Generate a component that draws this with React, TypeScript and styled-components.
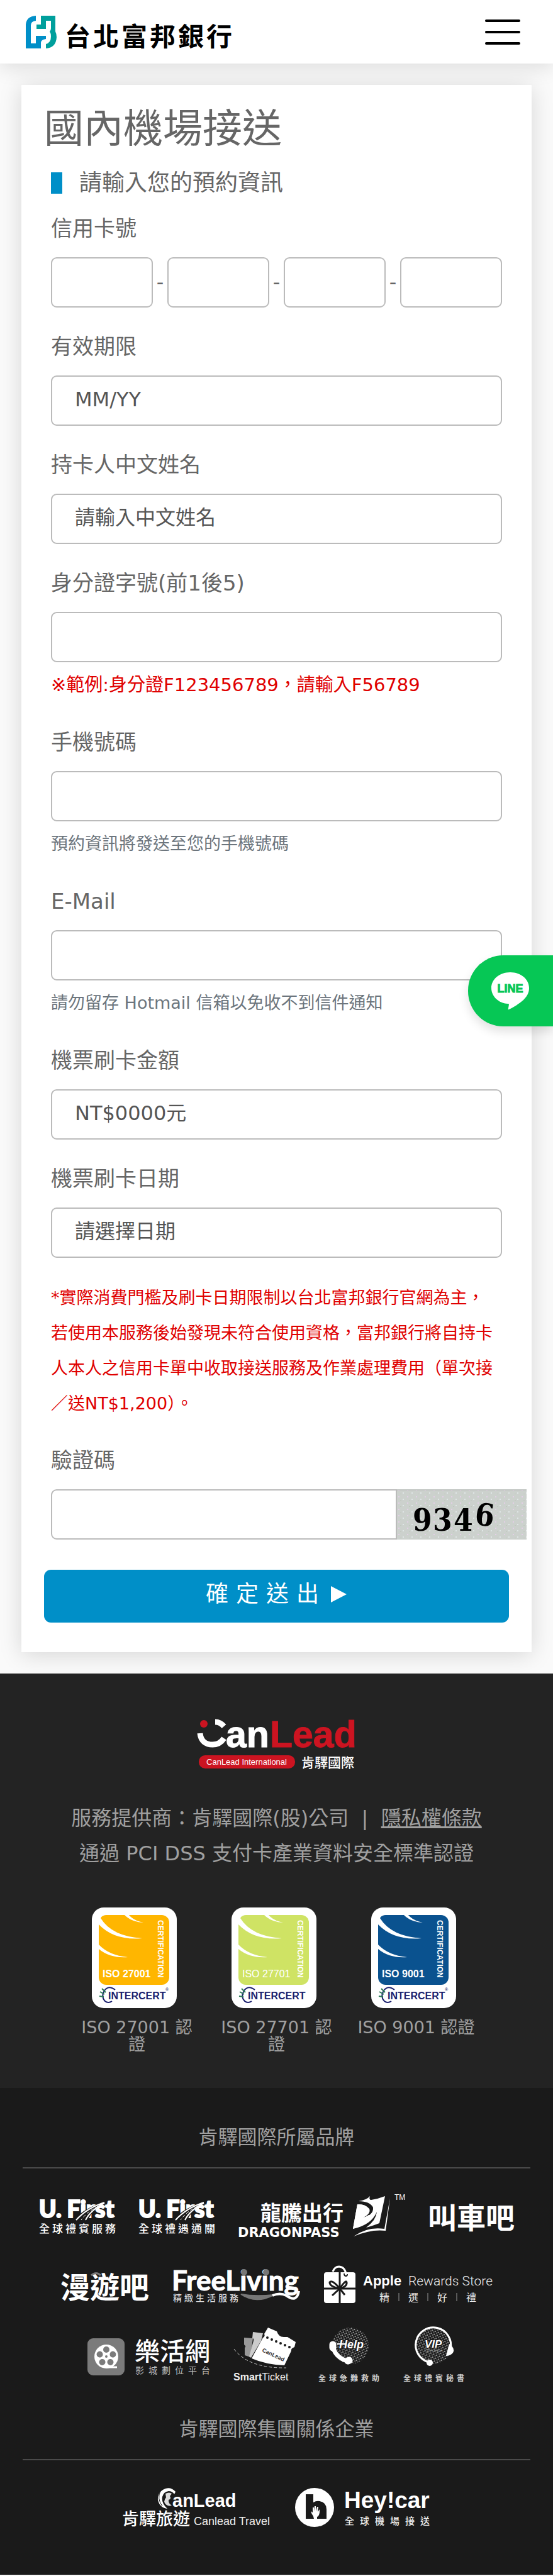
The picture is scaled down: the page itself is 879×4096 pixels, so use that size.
import React from 'react';
import styled, { createGlobalStyle } from 'styled-components';

const textFont = `'DejaVu Sans', 'Noto Sans CJK TC', sans-serif`;
const logoFont = `'Liberation Sans', 'Noto Sans CJK TC', sans-serif`;
const cjkFont = `'Noto Sans CJK TC', sans-serif`;

const GlobalStyle = createGlobalStyle`
  *, *::before, *::after { box-sizing: border-box; }
  body {
    margin: 0;
    background: #fafafa;
    color: #666;
    font-family: ${textFont};
  }
  svg { overflow: visible; }
`;

const Page = styled.div`
  position: relative;
  overflow-x: hidden;
`;

/* ---------- header ---------- */

const Header = styled.header`
  display: flex;
  align-items: center;
  justify-content: space-between;
  height: 101px;
  padding: 0 52px 0 41px;
  background: #fff;
  box-shadow: 0 6px 30px rgba(0, 0, 0, 0.12);
`;

const BankLink = styled.a`
  display: flex;
  align-items: center;
  gap: 12px;
  color: #000;
  text-decoration: none;
`;

const BankName = styled.span`
  padding-top: 8px;
  font: 700 41px/52px ${cjkFont};
  letter-spacing: 4px;
`;

const MenuButton = styled.button`
  display: flex;
  flex-direction: column;
  gap: 14px;
  width: 56px;
  padding: 0;
  border: 0;
  background: none;
`;

const MenuBar = styled.span`
  height: 4px;
  border-radius: 2px;
  background: #000;
`;

/* ---------- booking form ---------- */

const Main = styled.main`
  padding: 34px;
`;

const Card = styled.form`
  padding: 32px 36px 47px;
  background: #fff;
  box-shadow: 0 4px 34px rgba(0, 0, 0, 0.15);
`;

const Title = styled.h1`
  margin: 0;
  font-size: 63px;
  font-weight: 400;
  line-height: 76px;
`;

const Fields = styled.div`
  display: flex;
  flex-direction: column;
  gap: 40px;
  padding: 0 11px;
`;

const Subtitle = styled.h2`
  display: flex;
  align-items: center;
  gap: 27px;
  margin: 31px 0 33px;
  padding: 0 11px;
  font-size: 36px;
  font-weight: 400;
  line-height: 34px;

  &::before {
    content: '';
    width: 18px;
    height: 34px;
    background: #008fc8;
  }
`;

const Field = styled.div`
  display: flex;
  flex-direction: column;
`;

const Label = styled.label`
  margin-bottom: 24px;
  font-size: 34px;
  line-height: 44px;
`;

const Input = styled.input`
  width: 100%;
  min-width: 0;
  height: 80px;
  padding: 0 36px 4px;
  border: 2px solid #bbb;
  border-radius: 9px;
  background: #fff;
  color: #555;
  font: 32px/44px ${textFont};

  &::placeholder {
    color: #555;
    opacity: 1;
  }
`;

const Hint = styled.small<{ $alert?: boolean }>`
  margin: 16px 0 9px;
  color: ${(p) => (p.$alert ? '#e00000' : '#6c757d')};
  font-size: ${(p) => (p.$alert ? 29 : 27)}px;
  line-height: 40px;
`;

const CardNumber = styled.div`
  display: flex;
  align-items: center;
  font-size: 32px;
`;

const Dash = styled.span`
  flex: 0 0 23px;
  text-align: center;
`;

const Terms = styled.p`
  margin: -4px 0 0;
  color: #e00000;
  font-size: 27px;
  line-height: 56px;
`;

const CaptchaRow = styled.div`
  display: flex;
  margin-right: -39px;

  ${Input} {
    border-radius: 9px 0 0 9px;
  }

  svg {
    flex-shrink: 0;
  }
`;

const Submit = styled.button`
  display: flex;
  align-items: center;
  justify-content: center;
  gap: 7px;
  width: 100%;
  height: 84px;
  margin-top: 48px;
  padding-bottom: 8px;
  border: 0;
  border-radius: 11px;
  background: #008fc8;
  color: #fff;
  font: 36px/48px ${textFont};
  letter-spacing: 12px;
`;

const LineLink = styled.a`
  position: absolute;
  top: 1519px;
  right: 0;
  display: flex;
  align-items: center;
  width: 135px;
  height: 113px;
  padding-left: 37px;
  border-radius: 56px 0 0 56px;
  background: #06c755;
  box-shadow: 0 8px 16px rgba(0, 0, 0, 0.12);
`;

/* ---------- footer ---------- */

const Provider = styled.section`
  display: flex;
  flex-direction: column;
  align-items: center;
  padding: 72px 36px 56px;
  background: #232323;
  color: #a0a0a0;
`;

const ProviderText = styled.p`
  margin: 50px 0 58px;
  font-size: 32px;
  line-height: 56px;
  text-align: center;

  a {
    color: inherit;
  }
`;

const Badges = styled.ul`
  display: flex;
  gap: 32px;
  margin: 0;
  padding: 0;
  list-style: none;
`;

const BadgeItem = styled.li`
  display: flex;
  flex-direction: column;
  align-items: center;
  gap: 17px;
  width: 190px;
  font-size: 27px;
  line-height: 27px;
  text-align: center;

  svg {
    margin-right: 8px;
  }
`;

const Brands = styled.section`
  padding: 54px 36px 62px;
  background: #1a1a1a;
  color: #a0a0a0;
`;

const BrandHeading = styled.h3`
  margin: 0 0 30px;
  padding-bottom: 24px;
  border-bottom: 2px solid #4a4a4a;
  font-size: 31px;
  font-weight: 400;
  line-height: 48px;
  text-align: center;
`;

const LogoGrid = styled.div`
  display: flex;
  flex-wrap: wrap;
  justify-content: center;
  gap: 20px 36px;

  & + ${BrandHeading} {
    margin-top: 50px;
  }
`;

const LogoLink = styled.a`
  display: block;
  height: 90px;
`;

/* ---------- drawings ---------- */

const BankMark = () => (
  <svg width="50" height="52" viewBox="0 0 50 52" aria-hidden="true">
    <path fill="#008fc8" d="M16 0V8Q8 9 8 15V44H16V32H32V37Q24 38 24 43V52H0V14Q1 1 16 0Z" />
    <path fill="#009f9c" d="M24 0H47V25Q49 29 49 34Q48 51 32 52V45Q40 43 40 33Q40 28 38 25Q40 23 40 20V8H32V21H17V14H24Z" />
  </svg>
);

const Captcha = () => (
  <svg width="206" height="80" viewBox="0 0 206 80" role="img" aria-label="驗證碼圖片">
    <defs>
      <pattern id="noise" width="14" height="10" patternUnits="userSpaceOnUse">
        <rect width="14" height="10" fill="#ccd1cd" />
        <rect x="2" y="1" width="2" height="2" fill="#e3cfe6" />
        <rect x="9" y="5" width="2" height="2" fill="#dfe6e6" />
        <rect x="5" y="7" width="2" height="1" fill="#c0c8bf" />
      </pattern>
    </defs>
    <rect width="206" height="80" fill="url(#noise)" />
    <rect width="206" height="2" fill="#c2c6c3" />
    <g fontFamily="'DejaVu Serif Condensed','DejaVu Serif',serif" fontWeight="700" fontSize="49" fill="#000">
      <text x="25" y="66">9</text>
      <text x="57" y="66">3</text>
      <text x="90" y="66">4</text>
      <text x="124" y="58" transform="rotate(6 140 42)">6</text>
    </g>
  </svg>
);

const LineMark = () => (
  <svg width="60" height="60" viewBox="0 0 60 60" role="img" aria-label="LINE">
    <path fill="#fff" d="M30 0C47 0 60 11 60 25C60 33 56 39 51 44C44 50 35 56 28 59Q26 60 27 57L28 51Q28 50 26 50C11 49 0 38 0 25C0 11 13 0 30 0Z" />
    <text x="30" y="32" textAnchor="middle" fontFamily={logoFont} fontWeight="700" fontSize="18" fill="#06c755" stroke="#06c755">LINE</text>
  </svg>
);

const CanLeadLogo = () => (
  <svg width="254" height="80" viewBox="0 0 254 80" role="img" aria-label="CanLead International 肯驛國際">
    <g fill="none" stroke="#fff" strokeWidth="9">
      <path d="M5 23C6 35 14 41 25 41C33 41 39 37 43 31" />
      <path d="M29 5Q37 5 43 12" />
    </g>
    <circle cx="11" cy="8" r="6" fill="#cc1421" />
    <g fontFamily={logoFont} fontWeight="700" fontSize="59">
      <text x="46" y="45" fill="#fff" stroke="#fff">an</text>
      <text x="116" y="45" fill="#cc1421" stroke="#cc1421">Lead</text>
    </g>
    <rect x="3" y="58" width="153" height="21" rx="10" fill="#cc1421" />
    <text x="79" y="73" textAnchor="middle" fontFamily={logoFont} fontSize="13" fill="#fff">CanLead International</text>
    <text x="166" y="77" fontFamily={cjkFont} fontWeight="500" fontSize="21" fill="#fff">肯驛國際</text>
  </svg>
);

const IsoBadge = ({ color, code, low }: { color: string; code: string; low?: boolean }) => (
  <svg width="135" height="160" viewBox="0 0 135 160" role="img" aria-label={`INTERCERT ${code}`}>
    <rect width="135" height="160" rx="19" fill="#fff" />
    <rect x="11" y="12" width="112" height="111" rx="12" fill={color} />
    <g fill="#fff">
      <path d="M10 11H17L14 17Q32 46 80 49Q36 53 11 27Z" />
      <path d="M51 11H58Q66 21 82 24Q62 23 51 11Z" />
      <path d="M11 59Q27 76 57 79Q29 81 11 66Z" />
      <text x="17" y="111" fontFamily={logoFont} fontSize="16" fontWeight={low ? 400 : 700}>{code}</text>
      <text transform="translate(105 20) rotate(90)" fontFamily={logoFont} fontSize="12" fontWeight="700">CERTIFICATION</text>
    </g>
    <path d="M37 131Q27 123 20 132Q14 142 21 149Q26 153 32 149" fill="none" stroke="#1a1f6e" strokeWidth="2" />
    <path d="M13 134L20 138M12 141L19 142M16 129L22 135" stroke="#2c7a55" strokeWidth="2" />
    <text x="26" y="146" fontFamily={logoFont} fontSize="16" fontWeight="700" fill="#1a1f6e">INTERCERT</text>
    {!low && <text x="117" y="133" fontFamily={logoFont} fontSize="7" fill="#1a1f6e">®</text>}
  </svg>
);

const UFirst = ({ caption }: { caption: string }) => (
  <svg width="122" height="90" viewBox="0 0 122 90" role="img" aria-label={`U. First ${caption}`}>
    <text x="0" y="48" fontFamily={`Lato, ${logoFont}`} fontWeight="900" fontSize="37" fill="#fff" stroke="#fff" strokeWidth="2">U. First</text>
    <path d="M106 23Q76 30 54 52H78Q84 36 106 23Z" fill="#1a1a1a" />
    <path d="M104 24Q76 33 59 52M104 25Q82 36 74 52" fill="none" stroke="#fff" strokeWidth="2" />
    <path d="M101 27Q78 36 67 52" fill="none" stroke="#fff" strokeWidth="1" strokeDasharray="5 3" />
    <text x="0" y="72" fontFamily={cjkFont} fontWeight="500" fontSize="17" letterSpacing="4" fill="#fff">{caption}</text>
  </svg>
);

const DragonPass = () => (
  <svg width="267" height="90" viewBox="0 0 267 90" role="img" aria-label="龍騰出行 DRAGONPASS">
    <g fill="#fff">
      <text x="36" y="53" fontFamily={cjkFont} fontWeight="700" fontSize="33">龍騰出行</text>
      <text x="0" y="79" fontFamily={textFont} fontWeight="700" fontSize="21">DRAGONPASS</text>
      <path d="M192 22Q205 20 210 14Q208 20 212 20Q224 18 234 14L225 57Q212 62 204 64Q220 52 221 39Q212 60 183 66L190 27Q202 26 209 34Q212 42 199 48Q216 44 215 32Q210 22 192 22Z" />
      <path d="M190 27L183 66Q208 58 216 46L208 44Q204 47 199 48Q211 42 208 34Q202 26 190 27Z" />
      <path d="M242 17L235 69Q212 66 184 78Q206 62 233 66Z" />
      <text x="249" y="20" fontFamily={logoFont} fontSize="12">TM</text>
    </g>
  </svg>
);

const CarBar = () => (
  <svg width="137" height="90" viewBox="0 0 137 90" role="img" aria-label="叫車吧">
    <text x="-1" y="65" fontFamily={cjkFont} fontWeight="700" fontSize="46" fill="#fff">叫車吧</text>
  </svg>
);

const RoamBar = () => (
  <svg width="143" height="90" viewBox="0 0 143 90" role="img" aria-label="漫遊吧">
    <text x="0" y="66" fontFamily={cjkFont} fontWeight="700" fontSize="47" fill="#fff">漫遊吧</text>
    <path d="M49 30Q57 23 64 30" fill="none" stroke="#777" strokeWidth="3" />
  </svg>
);

const FreeLiving = () => (
  <svg width="203" height="90" viewBox="0 0 203 90" role="img" aria-label="FreeLiving 精緻生活服務">
    <text x="-2" y="54" fontFamily={`Lato, ${logoFont}`} fontWeight="700" fontSize="44" fill="#fff" stroke="#fff">FreeLiving</text>
    <circle cx="113" cy="25" r="5" fill="#777" />
    <circle cx="148" cy="25" r="5" fill="#777" />
    <text x="0" y="71" fontFamily={cjkFont} fontWeight="500" fontSize="14" letterSpacing="4" fill="#ddd">精緻生活服務</text>
    <path d="M108 60Q132 76 160 61Q130 64 108 60Z" fill="#777" stroke="#777" strokeWidth="2" />
    <path d="M158 62Q170 57 180 62Q197 74 200 55" fill="none" stroke="#fff" strokeWidth="4" />
  </svg>
);

const AppleRewards = () => (
  <svg width="269" height="90" viewBox="0 0 269 90" role="img" aria-label="Apple Rewards Store 精選好禮">
    <rect x="1" y="25" width="50" height="49" rx="4" fill="#fff" />
    <g fill="none" stroke="#1a1a1a" strokeWidth="3">
      <path d="M26 25V74M1 51H51" />
      <path d="M26 51Q10 48 10 41Q14 36 26 51Q36 36 37 41Q38 48 26 51L14 62M26 51L34 61" />
      <path d="M33 27Q33 31 36 31Q38 31 38 28" strokeWidth="2" />
    </g>
    <path d="M15 24Q18 16 25 16Q35 17 36 29" fill="none" stroke="#fff" strokeWidth="3" />
    <text x="63" y="46" fontFamily={logoFont} fontWeight="700" fontSize="22" fill="#fff">Apple</text>
    <text x="269" y="46" textAnchor="end" fontFamily="Roboto, sans-serif" fontWeight="300" fontSize="21" fill="#eee">Rewards Store</text>
    <g fontFamily={cjkFont} fontSize="16" fill="#eee" textAnchor="middle">
      <text x="97" y="71">精</text>
      <text x="143" y="71">選</text>
      <text x="189" y="71">好</text>
      <text x="235" y="71">禮</text>
    </g>
    <path d="M120 58V71M166 58V71M212 58V71" stroke="#999" />
  </svg>
);

const reelHoles = [0, 72, 144, 216, 288];

const MovieSite = () => (
  <svg width="196" height="90" viewBox="0 0 196 90" role="img" aria-label="樂活網 影城劃位平台">
    <rect y="20" width="59" height="59" rx="9" fill="#7b7b7b" />
    <circle cx="30" cy="49" r="19" fill="#fff" />
    <path d="M30 66H47" stroke="#fff" strokeWidth="3" />
    {reelHoles.map((a) => (
      <circle key={a} cx="30" cy="38" r="5" fill="#7b7b7b" transform={`rotate(${a} 30 49)`} />
    ))}
    <circle cx="30" cy="49" r="2" fill="#7b7b7b" />
    <text x="75" y="55" fontFamily={cjkFont} fontWeight="500" fontSize="40" fill="#fff">樂活網</text>
    <text x="76" y="76" fontFamily={cjkFont} fontSize="14" letterSpacing="7" fill="#bbb">影城劃位平台</text>
  </svg>
);

const ticketHoles = [0, 1, 2, 3, 4, 5];

const SmartTicket = () => (
  <svg width="99" height="90" viewBox="0 0 99 90" role="img" aria-label="SmartTicket">
    <path d="M17 19L31 20L27 50L18 47V35Q21 33 17 30Z" fill="#999" />
    <path d="M31 10L47 12L44 24L28 51L25 49L32 24Q33 20 30 20Z" fill="#ccc" />
    <path d="M55 3L69 9Q72 18 80 18L86 18L99 26L97 34Q91 36 92 40L81 63Q52 62 29 52L47 19Q51 17 49 13Z" fill="#fff" />
    {ticketHoles.map((i) => (
      <circle key={i} cx={54 + i * 7} cy={19 + i * 3} r="2" fill="#1a1a1a" />
    ))}
    <text transform="translate(45 41) rotate(25)" fontFamily={logoFont} fontWeight="700" fontSize="9" fill="#333">CanLead</text>
    <path d="M1 37Q24 68 84 67" fill="none" stroke="#bbb" strokeDasharray="5 3" />
    <text x="0" y="87" fontFamily={logoFont} fontSize="16" fill="#eee">
      <tspan fontWeight="700">Smart</tspan>Ticket
    </text>
  </svg>
);

const Globe = ({ cx, id }: { cx: number; id: string }) => (
  <>
    <defs>
      <pattern id={id} width="5" height="5" patternUnits="userSpaceOnUse" patternTransform="rotate(20)">
        <circle cx="1" cy="1" r="1" fill="#bbb" />
        <circle cx="4" cy="3" r="1" fill="#888" />
      </pattern>
    </defs>
    <circle cx={cx} cy="32" r="29" fill={`url(#${id})`} />
  </>
);

const HelpLogo = () => (
  <svg width="99" height="90" viewBox="0 0 99 90" role="img" aria-label="Help 全球急難救助">
    <Globe cx={51} id="help-dots" />
    <path d="M23 31Q25 50 48 57" fill="none" stroke="#fff" strokeWidth="7" strokeLinecap="round" />
    <path d="M23 30V35M47 56L49 55" stroke="#fff" strokeWidth="11" strokeLinecap="round" />
    <text x="33" y="36" fontFamily={logoFont} fontWeight="700" fontStyle="italic" fontSize="18" fill="#fff" stroke="#1a1a1a" strokeWidth="2" paintOrder="stroke">Help</text>
    <path d="M30 29H37" stroke="#fff" strokeWidth="2" />
    <text x="0" y="88" fontFamily={cjkFont} fontWeight="700" fontSize="12" letterSpacing="5" fill="#ccc">全球急難救助</text>
  </svg>
);

const VipLogo = () => (
  <svg width="99" height="90" viewBox="0 0 99 90" role="img" aria-label="VIP 全球禮賓秘書">
    <Globe cx={48} id="vip-dots" />
    <path d="M41 58A28 28 0 1 1 75 37" fill="none" stroke="#fff" strokeWidth="3" />
    <path d="M73 29Q83 36 79 43Q75 48 68 48Z" fill="#fff" />
    <circle cx="42" cy="59" r="5" fill="#fff" />
    <text x="34" y="35" fontFamily={logoFont} fontWeight="700" fontStyle="italic" fontSize="17" fill="#fff" stroke="#1a1a1a" strokeWidth="2" paintOrder="stroke">VIP</text>
    <text x="35" y="41" fontFamily={logoFont} fontSize="6" fill="#aaa">Concierge</text>
    <text x="0" y="88" fontFamily={cjkFont} fontWeight="700" fontSize="12" letterSpacing="5" fill="#ccc">全球禮賓秘書</text>
  </svg>
);

const CanLeadTravel = () => (
  <svg width="239" height="90" viewBox="0 0 239 90" role="img" aria-label="CanLead 肯驛旅遊 Canlead Travel">
    <path d="M85 20Q78 12 69 15Q56 20 57 33Q60 46 72 47Q62 38 64 28Q66 20 74 19Q80 19 83 24Z" fill="#fff" />
    <path d="M69 23Q75 20 79 23L76 27Q79 31 74 33Q73 38 79 42Q70 44 67 36Q68 31 70 29Z" fill="#ddd" />
    <path d="M61 19Q55 31 64 43" fill="none" stroke="#1a1a1a" />
    <text x="80" y="44" fontFamily={logoFont} fontWeight="700" fontSize="29" fill="#fff">anLead</text>
    <text x="0" y="73" fontFamily={cjkFont} fontWeight="500" fontSize="27" fill="#fff">肯驛旅遊</text>
    <text x="114" y="73" fontFamily={logoFont} fontSize="18" fill="#eee">Canlead Travel</text>
  </svg>
);

const HeyCar = () => (
  <svg width="217" height="90" viewBox="0 0 217 90" role="img" aria-label="Hey!car 全球機場接送">
    <circle cx="31" cy="45" r="31" fill="#fff" />
    <path d="M17 24H29V37Q34 34 39 35Q50 37 50 48V63H17Z" fill="#1a1a1a" />
    <path d="M29 59Q26 55 25 51L28 53V45H30V51L31 43H33V51L35 44H37L36 52L39 48V53Q38 59 35 60V63H30Z" fill="#fff" />
    <text x="78" y="46" fontFamily={logoFont} fontWeight="700" fontSize="37" fill="#fff">Hey!car</text>
    <text x="79" y="72" fontFamily={cjkFont} fontWeight="500" fontSize="15" letterSpacing="9" fill="#eee">全球機場接送</text>
  </svg>
);

/* ---------- page ---------- */

type FieldProps = {
  id: string;
  label: string;
  placeholder?: string;
  type?: string;
  hint?: string;
  alert?: boolean;
};

const TextField = ({ id, label, placeholder, type = 'text', hint, alert }: FieldProps) => (
  <Field>
    <Label htmlFor={id}>{label}</Label>
    <Input id={id} type={type} placeholder={placeholder} />
    {hint && <Hint $alert={alert}>{hint}</Hint>}
  </Field>
);

const brands = [
  <UFirst caption="全球禮賓服務" />,
  <UFirst caption="全球禮遇通關" />,
  <DragonPass />,
  <CarBar />,
  <RoamBar />,
  <FreeLiving />,
  <AppleRewards />,
  <MovieSite />,
  <SmartTicket />,
  <HelpLogo />,
  <VipLogo />,
];

export default function App() {
  return (
    <Page>
      <GlobalStyle />
      <Header>
        <BankLink href="#">
          <BankMark />
          <BankName>台北富邦銀行</BankName>
        </BankLink>
        <MenuButton type="button" aria-label="選單">
          <MenuBar />
          <MenuBar />
          <MenuBar />
        </MenuButton>
      </Header>

      <Main>
        <Card onSubmit={(e) => e.preventDefault()}>
          <Title>國內機場接送</Title>
          <Subtitle>請輸入您的預約資訊</Subtitle>
          <Fields>
            <Field>
              <Label htmlFor="card-1">信用卡號</Label>
              <CardNumber>
                <Input id="card-1" aria-label="信用卡號第一段" />
                <Dash>-</Dash>
                <Input aria-label="信用卡號第二段" />
                <Dash>-</Dash>
                <Input aria-label="信用卡號第三段" />
                <Dash>-</Dash>
                <Input aria-label="信用卡號第四段" />
              </CardNumber>
            </Field>
            <TextField id="expiry" label="有效期限" placeholder="MM/YY" />
            <TextField id="name" label="持卡人中文姓名" placeholder="請輸入中文姓名" />
            <TextField id="idno" label="身分證字號(前1後5)" hint="※範例:身分證F123456789，請輸入F56789" alert />
            <TextField id="phone" label="手機號碼" type="tel" hint="預約資訊將發送至您的手機號碼" />
            <TextField id="email" label="E-Mail" type="email" hint="請勿留存 Hotmail 信箱以免收不到信件通知" />
            <TextField id="amount" label="機票刷卡金額" placeholder="NT$0000元" />
            <TextField id="date" label="機票刷卡日期" placeholder="請選擇日期" />
            <Terms>
              *實際消費門檻及刷卡日期限制以台北富邦銀行官網為主，
              <br />
              若使用本服務後始發現未符合使用資格，富邦銀行將自持卡人本人之信用卡單中收取接送服務及作業處理費用（單次接／送NT$1,200）。
            </Terms>
            <Field>
              <Label htmlFor="captcha">驗證碼</Label>
              <CaptchaRow>
                <Input id="captcha" />
                <Captcha />
              </CaptchaRow>
            </Field>
          </Fields>
          <Submit type="submit">
            確定送出
            <svg width="26" height="26" viewBox="0 0 26 26" aria-hidden="true">
              <path d="M0 0L25 13L0 26Z" fill="#fff" />
            </svg>
          </Submit>
        </Card>
      </Main>

      <LineLink href="#">
        <LineMark />
      </LineLink>

      <footer>
        <Provider>
          <CanLeadLogo />
          <ProviderText>
            服務提供商：肯驛國際(股)公司&nbsp; | &nbsp;<a href="#">隱私權條款</a>
            <br />
            通過 PCI DSS 支付卡產業資料安全標準認證
          </ProviderText>
          <Badges>
            <BadgeItem>
              <IsoBadge color="#ffb600" code="ISO 27001" />
              ISO 27001 認證
            </BadgeItem>
            <BadgeItem>
              <IsoBadge color="#cfe364" code="ISO 27701" low />
              ISO 27701 認證
            </BadgeItem>
            <BadgeItem>
              <IsoBadge color="#0a528f" code="ISO 9001" />
              ISO 9001 認證
            </BadgeItem>
          </Badges>
        </Provider>
        <Brands>
          <BrandHeading>肯驛國際所屬品牌</BrandHeading>
          <LogoGrid>
            {brands.map((logo, i) => (
              <LogoLink key={i} href="#">{logo}</LogoLink>
            ))}
          </LogoGrid>
          <BrandHeading>肯驛國際集團關係企業</BrandHeading>
          <LogoGrid>
            <LogoLink href="#"><CanLeadTravel /></LogoLink>
            <LogoLink href="#"><HeyCar /></LogoLink>
          </LogoGrid>
        </Brands>
      </footer>
    </Page>
  );
}
